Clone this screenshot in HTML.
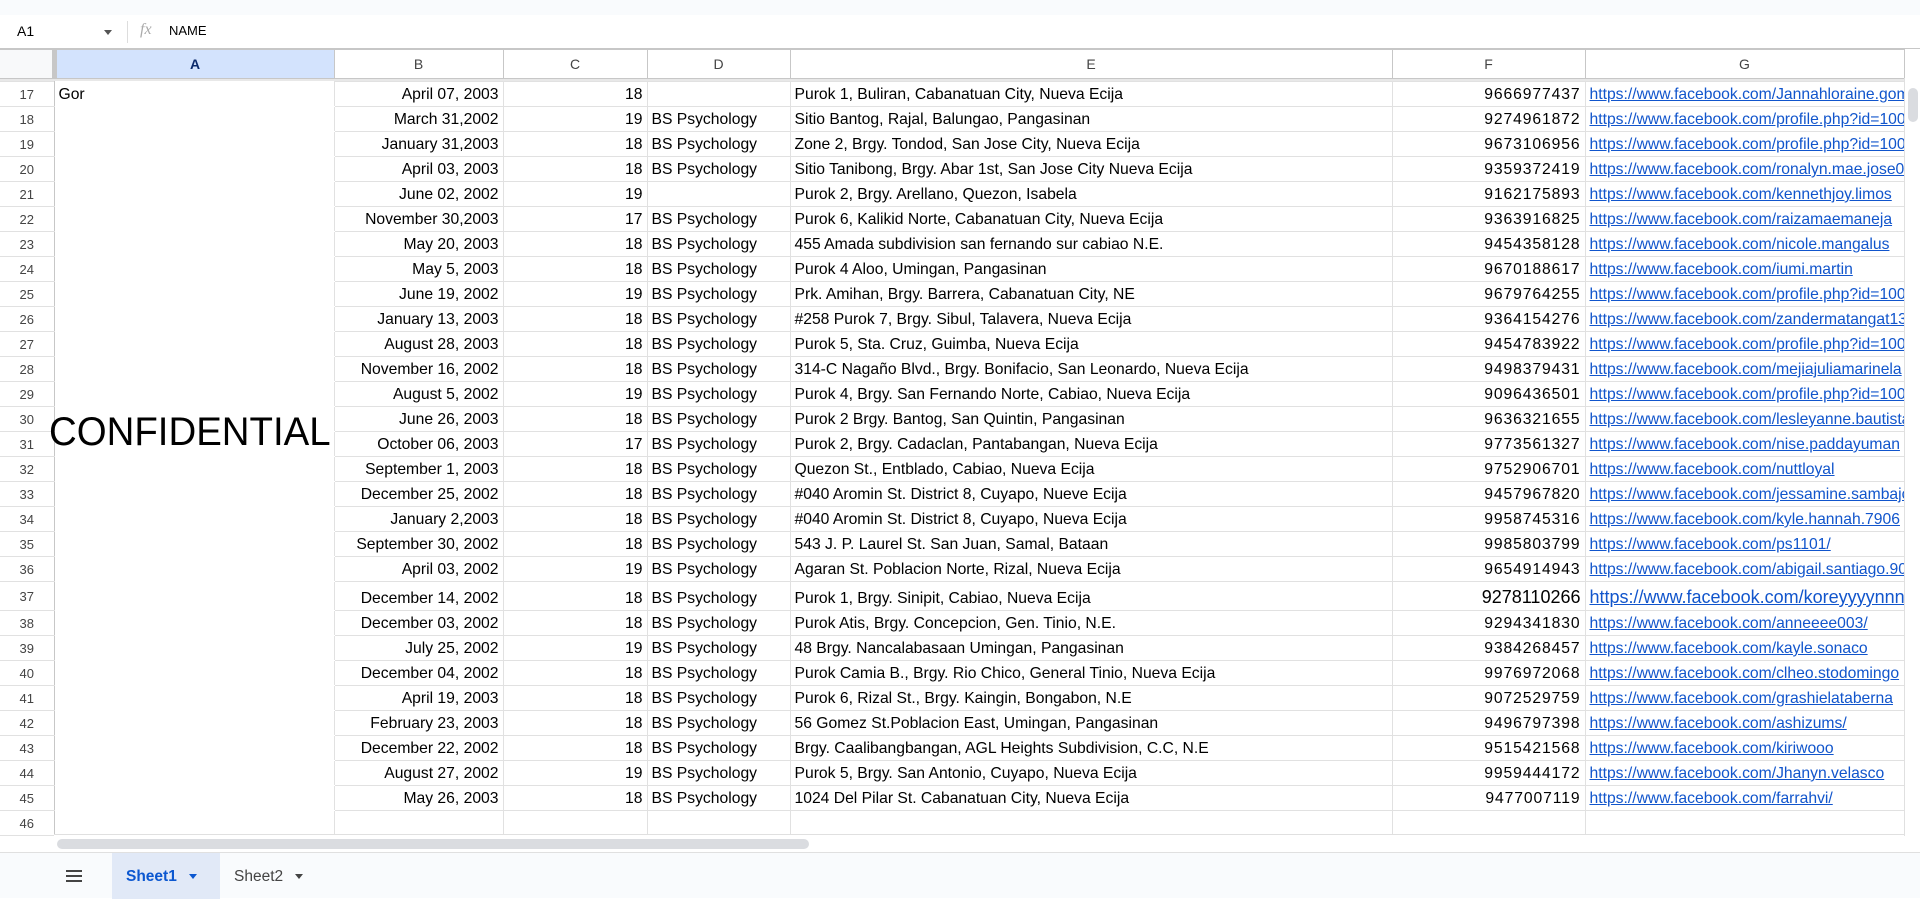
<!DOCTYPE html>
<html><head><meta charset="utf-8"><style>
*{box-sizing:border-box;margin:0;padding:0}
body{width:1920px;height:898px;overflow:hidden;background:#fff;font-family:"Liberation Sans",Arial,sans-serif;font-size:15.7px;color:#000;position:relative}
.top{position:absolute;left:0;top:0;width:1920px;height:15px;background:#f9fbfd}
.fbar{position:absolute;left:0;top:15px;width:1920px;height:34px;background:#fff;border-bottom:1px solid #c7c7c7}
.fbar .a1{position:absolute;left:17px;top:8px;font-size:14px}
.fbar .dd{position:absolute;left:104px;top:15px;width:0;height:0;border-left:4px solid transparent;border-right:4px solid transparent;border-top:5px solid #555}
.fbar .sep{position:absolute;left:127px;top:6px;width:1px;height:22px;background:#ddd}
.fbar .fx{position:absolute;left:140px;top:6px;font-family:"Liberation Serif",serif;font-style:italic;color:#aaa;font-size:16px}
.fbar .nm{position:absolute;left:169px;top:8px;font-size:13px}
table{position:absolute;left:0;top:49px;width:1904px;border-collapse:collapse;table-layout:fixed}
td{border:1px solid #e1e1e1;height:25px;padding:0 4px;white-space:nowrap;overflow:hidden;vertical-align:bottom;padding-bottom:2px}
td.g{text-overflow:clip;padding-right:0}
tr.h td{height:29px;border-color:#c7c7c7;text-align:center;color:#444;font-size:14px;vertical-align:middle;padding:0}
tr.h td.sel{background:#d3e3fd;color:#0b2a6b;font-weight:bold}
tr.h td.c0{background:#f8f9fa;border-left:none;border-right:5px solid #c7c7c7}
tr.fz td{height:3px;padding:0;background:#e8e8e8;border:none}
td.rn{text-align:center;color:#444;font-size:13px;background:#fff;border-left:none;border-right:1px solid #c7c7c7;padding:0;vertical-align:middle}
td.A{border-top-color:#fff;border-bottom-color:#fff}
.r{text-align:right}
.n{letter-spacing:0.9px}
a{color:#1155cc;text-decoration:underline}
tr.big td{height:29px}
tr.big td.big{font-size:18px}
.conf{position:absolute;left:49px;top:410px;font-size:40px;color:#000;transform:scaleX(0.96);transform-origin:left top;white-space:nowrap}
.hs{position:absolute;left:54px;top:834px;width:1850px;height:18px;background:#fff;border-top:1px solid #e0e0e0}
.hs .th{position:absolute;left:3px;top:4px;width:752px;height:10px;border-radius:5px;background:#dadce0}
.vs{position:absolute;left:1904px;top:78px;width:16px;height:756px;background:#fff;border-left:1px solid #e0e0e0}
.vs .th{position:absolute;left:3px;top:10px;width:10px;height:34px;border-radius:5px;background:#dadce0}
.tabs{position:absolute;left:0;top:852px;width:1920px;height:46px;background:#f9fbfd;border-top:1px solid #e0e0e0}
.ham{position:absolute;left:66px;top:17px;width:16px;height:2px;background:#444;box-shadow:0 5px 0 #444,0 10px 0 #444}
.t1{position:absolute;left:112px;top:0;width:108px;height:46px;background:#e1e9f7;color:#0b57d0;font-weight:bold;font-size:15.5px;padding:15px 0 0 14px}
.t2{position:absolute;left:234px;top:15px;color:#444;font-size:15.5px}
.tri{display:inline-block;width:0;height:0;border-left:4px solid transparent;border-right:4px solid transparent;border-top:5px solid currentColor;margin-left:12px;vertical-align:middle}
</style></head><body>
<div class="top"></div>
<div class="fbar"><span class="a1">A1</span><span class="dd"></span><span class="sep"></span><span class="fx">fx</span><span class="nm">NAME</span></div>
<table>
<colgroup><col style="width:54px"><col style="width:280px"><col style="width:169px"><col style="width:144px"><col style="width:143px"><col style="width:602px"><col style="width:193px"><col style="width:319px"></colgroup>
<tr class="h"><td class="c0"></td><td class="sel">A</td><td>B</td><td>C</td><td>D</td><td>E</td><td>F</td><td>G</td></tr>
<tr class="fz"><td></td><td></td><td></td><td></td><td></td><td></td><td></td><td></td></tr>
<tr><td class="rn">17</td><td class="A">Gor</td><td class="r">April 07, 2003</td><td class="r">18</td><td></td><td>Purok 1, Buliran, Cabanatuan City, Nueva Ecija</td><td class="r n">9666977437</td><td class="g"><a>https://www.facebook.com/Jannahloraine.gomez</a></td></tr>
<tr><td class="rn">18</td><td class="A"></td><td class="r">March 31,2002</td><td class="r">19</td><td>BS Psychology</td><td>Sitio Bantog, Rajal, Balungao, Pangasinan</td><td class="r n">9274961872</td><td class="g"><a>https://www.facebook.com/profile.php?id=100</a></td></tr>
<tr><td class="rn">19</td><td class="A"></td><td class="r">January 31,2003</td><td class="r">18</td><td>BS Psychology</td><td>Zone 2, Brgy. Tondod, San Jose City, Nueva Ecija</td><td class="r n">9673106956</td><td class="g"><a>https://www.facebook.com/profile.php?id=100</a></td></tr>
<tr><td class="rn">20</td><td class="A"></td><td class="r">April 03, 2003</td><td class="r">18</td><td>BS Psychology</td><td>Sitio Tanibong, Brgy. Abar 1st, San Jose City Nueva Ecija</td><td class="r n">9359372419</td><td class="g"><a>https://www.facebook.com/ronalyn.mae.jose0</a></td></tr>
<tr><td class="rn">21</td><td class="A"></td><td class="r">June 02, 2002</td><td class="r">19</td><td></td><td>Purok 2, Brgy. Arellano, Quezon, Isabela</td><td class="r n">9162175893</td><td class="g"><a>https://www.facebook.com/kennethjoy.limos</a></td></tr>
<tr><td class="rn">22</td><td class="A"></td><td class="r">November 30,2003</td><td class="r">17</td><td>BS Psychology</td><td>Purok 6, Kalikid Norte, Cabanatuan City, Nueva Ecija</td><td class="r n">9363916825</td><td class="g"><a>https://www.facebook.com/raizamaemaneja</a></td></tr>
<tr><td class="rn">23</td><td class="A"></td><td class="r">May 20, 2003</td><td class="r">18</td><td>BS Psychology</td><td>455 Amada subdivision san fernando sur cabiao N.E.</td><td class="r n">9454358128</td><td class="g"><a>https://www.facebook.com/nicole.mangalus</a></td></tr>
<tr><td class="rn">24</td><td class="A"></td><td class="r">May 5, 2003</td><td class="r">18</td><td>BS Psychology</td><td>Purok 4 Aloo, Umingan, Pangasinan</td><td class="r n">9670188617</td><td class="g"><a>https://www.facebook.com/iumi.martin</a></td></tr>
<tr><td class="rn">25</td><td class="A"></td><td class="r">June 19, 2002</td><td class="r">19</td><td>BS Psychology</td><td>Prk. Amihan, Brgy. Barrera, Cabanatuan City, NE</td><td class="r n">9679764255</td><td class="g"><a>https://www.facebook.com/profile.php?id=100</a></td></tr>
<tr><td class="rn">26</td><td class="A"></td><td class="r">January 13, 2003</td><td class="r">18</td><td>BS Psychology</td><td>#258 Purok 7, Brgy. Sibul, Talavera, Nueva Ecija</td><td class="r n">9364154276</td><td class="g"><a>https://www.facebook.com/zandermatangat13</a></td></tr>
<tr><td class="rn">27</td><td class="A"></td><td class="r">August 28, 2003</td><td class="r">18</td><td>BS Psychology</td><td>Purok 5, Sta. Cruz, Guimba, Nueva Ecija</td><td class="r n">9454783922</td><td class="g"><a>https://www.facebook.com/profile.php?id=100</a></td></tr>
<tr><td class="rn">28</td><td class="A"></td><td class="r">November 16, 2002</td><td class="r">18</td><td>BS Psychology</td><td>314-C Nagaño Blvd., Brgy. Bonifacio, San Leonardo, Nueva Ecija</td><td class="r n">9498379431</td><td class="g"><a>https://www.facebook.com/mejiajuliamarinela</a></td></tr>
<tr><td class="rn">29</td><td class="A"></td><td class="r">August 5, 2002</td><td class="r">19</td><td>BS Psychology</td><td>Purok 4, Brgy. San Fernando Norte, Cabiao, Nueva Ecija</td><td class="r n">9096436501</td><td class="g"><a>https://www.facebook.com/profile.php?id=100</a></td></tr>
<tr><td class="rn">30</td><td class="A"></td><td class="r">June 26, 2003</td><td class="r">18</td><td>BS Psychology</td><td>Purok 2 Brgy. Bantog, San Quintin, Pangasinan</td><td class="r n">9636321655</td><td class="g"><a>https://www.facebook.com/lesleyanne.bautista</a></td></tr>
<tr><td class="rn">31</td><td class="A"></td><td class="r">October 06, 2003</td><td class="r">17</td><td>BS Psychology</td><td>Purok 2, Brgy. Cadaclan, Pantabangan, Nueva Ecija</td><td class="r n">9773561327</td><td class="g"><a>https://www.facebook.com/nise.paddayuman</a></td></tr>
<tr><td class="rn">32</td><td class="A"></td><td class="r">September 1, 2003</td><td class="r">18</td><td>BS Psychology</td><td>Quezon St., Entblado, Cabiao, Nueva Ecija</td><td class="r n">9752906701</td><td class="g"><a>https://www.facebook.com/nuttloyal</a></td></tr>
<tr><td class="rn">33</td><td class="A"></td><td class="r">December 25, 2002</td><td class="r">18</td><td>BS Psychology</td><td>#040 Aromin St. District 8, Cuyapo, Nueve Ecija</td><td class="r n">9457967820</td><td class="g"><a>https://www.facebook.com/jessamine.sambajon</a></td></tr>
<tr><td class="rn">34</td><td class="A"></td><td class="r">January 2,2003</td><td class="r">18</td><td>BS Psychology</td><td>#040 Aromin St. District 8, Cuyapo, Nueva Ecija</td><td class="r n">9958745316</td><td class="g"><a>https://www.facebook.com/kyle.hannah.7906</a></td></tr>
<tr><td class="rn">35</td><td class="A"></td><td class="r">September 30, 2002</td><td class="r">18</td><td>BS Psychology</td><td>543 J. P. Laurel St. San Juan, Samal, Bataan</td><td class="r n">9985803799</td><td class="g"><a>https://www.facebook.com/ps1101/</a></td></tr>
<tr><td class="rn">36</td><td class="A"></td><td class="r">April 03, 2002</td><td class="r">19</td><td>BS Psychology</td><td>Agaran St. Poblacion Norte, Rizal, Nueva Ecija</td><td class="r n">9654914943</td><td class="g"><a>https://www.facebook.com/abigail.santiago.90</a></td></tr>
<tr class="big"><td class="rn">37</td><td class="A"></td><td class="r">December 14, 2002</td><td class="r">18</td><td>BS Psychology</td><td>Purok 1, Brgy. Sinipit, Cabiao, Nueva Ecija</td><td class="r big">9278110266</td><td class="big g"><a>https://www.facebook.com/koreyyyynnn/</a></td></tr>
<tr><td class="rn">38</td><td class="A"></td><td class="r">December 03, 2002</td><td class="r">18</td><td>BS Psychology</td><td>Purok Atis, Brgy. Concepcion, Gen. Tinio, N.E.</td><td class="r n">9294341830</td><td class="g"><a>https://www.facebook.com/anneeee003/</a></td></tr>
<tr><td class="rn">39</td><td class="A"></td><td class="r">July 25, 2002</td><td class="r">19</td><td>BS Psychology</td><td>48 Brgy. Nancalabasaan Umingan, Pangasinan</td><td class="r n">9384268457</td><td class="g"><a>https://www.facebook.com/kayle.sonaco</a></td></tr>
<tr><td class="rn">40</td><td class="A"></td><td class="r">December 04, 2002</td><td class="r">18</td><td>BS Psychology</td><td>Purok Camia B., Brgy. Rio Chico, General Tinio, Nueva Ecija</td><td class="r n">9976972068</td><td class="g"><a>https://www.facebook.com/clheo.stodomingo</a></td></tr>
<tr><td class="rn">41</td><td class="A"></td><td class="r">April 19, 2003</td><td class="r">18</td><td>BS Psychology</td><td>Purok 6, Rizal St., Brgy. Kaingin, Bongabon, N.E</td><td class="r n">9072529759</td><td class="g"><a>https://www.facebook.com/grashielataberna</a></td></tr>
<tr><td class="rn">42</td><td class="A"></td><td class="r">February 23, 2003</td><td class="r">18</td><td>BS Psychology</td><td>56 Gomez St.Poblacion East, Umingan, Pangasinan</td><td class="r n">9496797398</td><td class="g"><a>https://www.facebook.com/ashizums/</a></td></tr>
<tr><td class="rn">43</td><td class="A"></td><td class="r">December 22, 2002</td><td class="r">18</td><td>BS Psychology</td><td>Brgy. Caalibangbangan, AGL Heights Subdivision, C.C, N.E</td><td class="r n">9515421568</td><td class="g"><a>https://www.facebook.com/kiriwooo</a></td></tr>
<tr><td class="rn">44</td><td class="A"></td><td class="r">August 27, 2002</td><td class="r">19</td><td>BS Psychology</td><td>Purok 5, Brgy. San Antonio, Cuyapo, Nueva Ecija</td><td class="r n">9959444172</td><td class="g"><a>https://www.facebook.com/Jhanyn.velasco</a></td></tr>
<tr><td class="rn">45</td><td class="A"></td><td class="r">May 26, 2003</td><td class="r">18</td><td>BS Psychology</td><td>1024 Del Pilar St. Cabanatuan City, Nueva Ecija</td><td class="r n">9477007119</td><td class="g"><a>https://www.facebook.com/farrahvi/</a></td></tr>
<tr><td class="rn">46</td><td class="A" style="border-bottom-color:#e1e1e1"></td><td></td><td></td><td></td><td></td><td></td><td></td></tr>
</table>
<div class="conf">CONFIDENTIAL</div>
<div class="vs"><div class="th"></div></div>
<div class="hs"><div class="th"></div></div>
<div class="tabs"><div class="ham"></div><div class="t1">Sheet1<span class="tri"></span></div><div class="t2">Sheet2<span class="tri"></span></div></div>
</body></html>
